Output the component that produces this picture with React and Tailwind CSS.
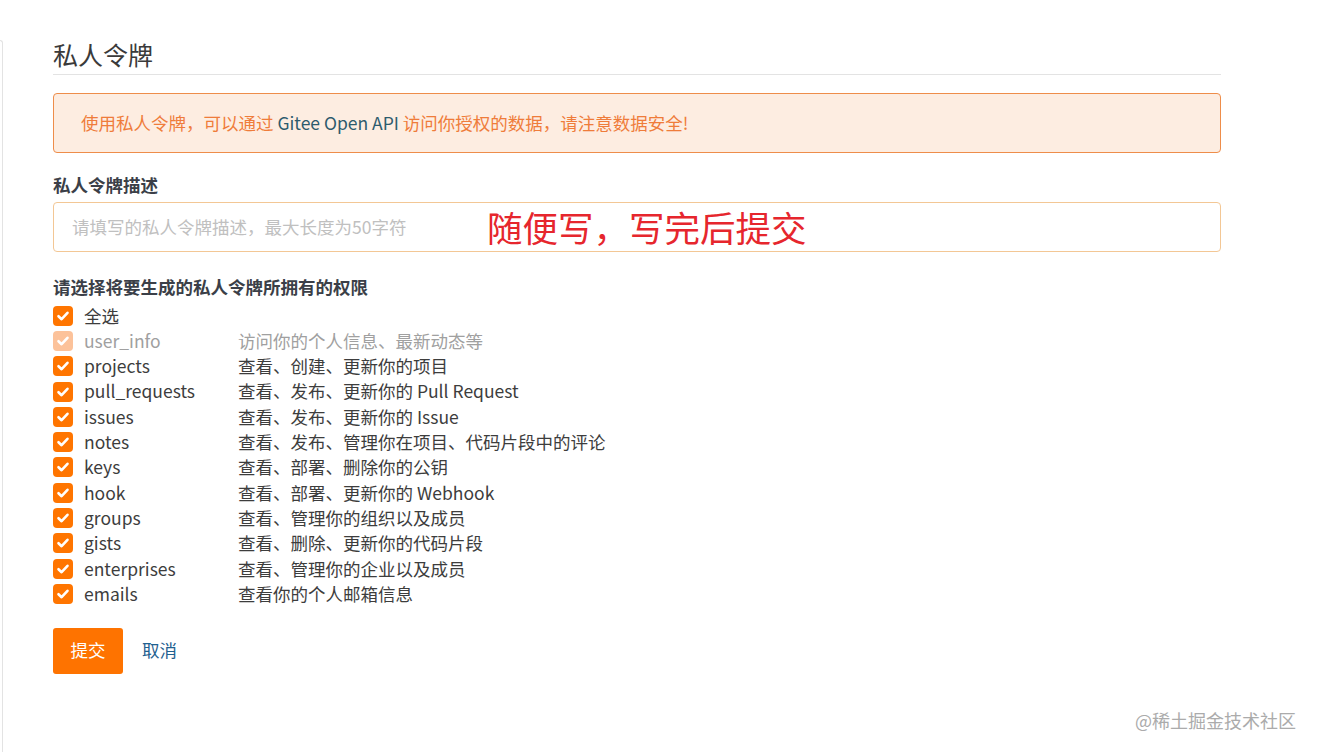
import React from 'react';

const font = { fontFamily: '"Noto Sans CJK SC", "Noto Sans", sans-serif' };

const scopes = [
    { name: 'user_info', desc: '访问你的个人信息、最新动态等', disabled: true },
    { name: 'projects', desc: '查看、创建、更新你的项目' },
    { name: 'pull_requests', desc: '查看、发布、更新你的 Pull Request' },
    { name: 'issues', desc: '查看、发布、更新你的 Issue' },
    { name: 'notes', desc: '查看、发布、管理你在项目、代码片段中的评论' },
    { name: 'keys', desc: '查看、部署、删除你的公钥' },
    { name: 'hook', desc: '查看、部署、更新你的 Webhook' },
    { name: 'groups', desc: '查看、管理你的组织以及成员' },
    { name: 'gists', desc: '查看、删除、更新你的代码片段' },
    { name: 'enterprises', desc: '查看、管理你的企业以及成员' },
    { name: 'emails', desc: '查看你的个人邮箱信息' },
];

const CheckBox = ({ disabled }) => (
    <span className={`w-5 h-5 shrink-0 rounded-[4px] flex items-center justify-center ${disabled ? 'bg-[#fcc29a]' : 'bg-[#ff7500]'}`}>
        <svg viewBox="0 0 20 20" className="w-5 h-5">
            <path d="M5.5 10.2 L8.6 13.2 L14.5 6.8" fill="none" stroke="white" strokeWidth="2.6" strokeLinecap="round" strokeLinejoin="round" />
        </svg>
    </span>
);

const App = () => {
    return (
        <div className="relative w-full h-[752px] bg-white flex overflow-hidden" style={font}>
            {/* sidebar edge */}
            <div className="w-[3px] mt-[40px] border-r border-t border-[#e3e3e3] rounded-tr-[4px]" />

            {/* Main */}
            <div className="flex-1 pl-[50px] pt-[39px]">
                <div className="w-[1168px]">
                    <div className="h-[36px] border-b border-[#e3e3e3] text-[25px] leading-[30px] text-[#3a3a3a]">私人令牌</div>

                    <div className="mt-[18px] h-[60px] rounded-[4px] border border-[#ee8d4a] bg-[#fdede1] flex items-center px-[27px] text-[17.5px] text-[#ef7c3a]">
                        使用私人令牌，可以通过&nbsp;<span className="text-[#2d5b6d]">Gitee Open API</span>&nbsp;访问你授权的数据，请注意数据安全!
                    </div>

                    <div className="mt-[20px] text-[17.5px] leading-[24px] font-bold text-[#3b3f48]">私人令牌描述</div>
                    <div className="relative mt-[5px] h-[50px] rounded-[4px] border border-[#f3c795] flex items-center px-[18px]">
                        <span className="text-[17.5px] text-[#c0c0c0]">请填写的私人令牌描述，最大长度为50字符</span>
                        <span className="absolute left-[433px] top-[1px] text-[35.5px] leading-[46px] text-[#e6262d]">随便写，写完后提交</span>
                    </div>

                    <div className="mt-[23px] text-[17.5px] leading-[24px] font-bold text-[#3b3f48]">请选择将要生成的私人令牌所拥有的权限</div>

                    <div className="mt-[4px] flex flex-col text-[17.5px]">
                        <div className="h-[25.3px] flex items-center">
                            <CheckBox />
                            <span className="ml-[11px] text-[#3d3d3d]">全选</span>
                        </div>
                        {scopes.map((s) => (
                            <div key={s.name} className="h-[25.3px] flex items-center">
                                <CheckBox disabled={s.disabled} />
                                <span className={`ml-[11px] w-[154px] ${s.disabled ? 'text-[#a0a0a0]' : 'text-[#3d3d3d]'}`}>{s.name}</span>
                                <span className={s.disabled ? 'text-[#a0a0a0]' : 'text-[#3d3d3d]'}>{s.desc}</span>
                            </div>
                        ))}
                    </div>

                    <div className="mt-[21px] flex items-center">
                        <button className="w-[70px] h-[46px] rounded-[3px] bg-[#fe7300] text-white text-[17.5px]">提交</button>
                        <span className="ml-[19px] text-[17.5px] text-[#1f6190]">取消</span>
                    </div>
                </div>
            </div>

            {/* watermark */}
            <div className="absolute left-[1135px] top-[708px] text-[18px] leading-[24px] text-[#ababab]">@稀土掘金技术社区</div>
        </div>
    );
};

export default App;
